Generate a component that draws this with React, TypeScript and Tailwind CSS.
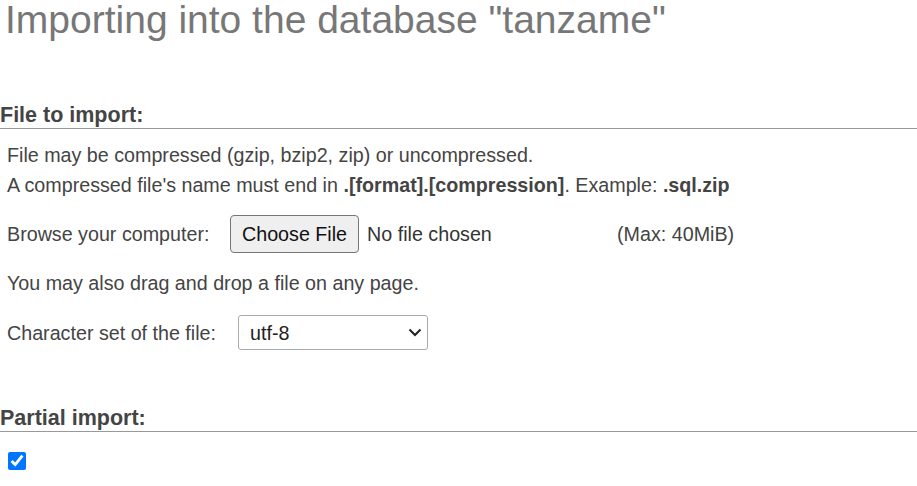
export default function App() {
  return (
    <div className="min-h-screen bg-white font-['Liberation_Sans',Arial,sans-serif] text-[#444]">
      <h1 className="h-[40px] pl-[5px] text-[39px] leading-[40px] text-[#777]">
        Importing into the database "tanzame"
      </h1>

      {/* File to import */}
      <section className="mt-[62px]">
        <h2 className="border-b border-[#999] text-[21.5px] font-bold leading-[26px] text-[#444]">
          File to import:
        </h2>
        <div className="pl-[7px] pt-[11px] text-[19.7px] leading-[30px]">
          <p>File may be compressed (gzip, bzip2, zip) or uncompressed.</p>
          <p>
            A compressed file's name must end in <b>.[format].[compression]</b>. Example: <b>.sql.zip</b>
          </p>

          <div className="mt-[15px] flex h-[38px] items-center">
            <span className="w-[223px]">Browse your computer:</span>
            <button className="h-[38px] rounded-[4px] border border-[#767676] bg-[#efefef] px-[11px] text-[#111]">
              Choose File
            </button>
            <span className="ml-[8px] w-[250px] text-[#333]">No file chosen</span>
            <span>(Max: 40MiB)</span>
          </div>

          <p className="mt-[15px]">You may also drag and drop a file on any page.</p>

          <div className="mt-[17px] flex h-[35px] items-center">
            <span className="w-[231px]">Character set of the file:</span>
            <div className="relative">
              <select className="h-[35px] w-[190px] appearance-none rounded-[3px] border border-[#aaa] bg-white pl-[11px] text-[#222]">
                <option>utf-8</option>
              </select>
              <svg className="pointer-events-none absolute right-[6px] top-[13px]" width="14" height="9" viewBox="0 0 14 9">
                <path d="M1.5 1.5 L7 7 L12.5 1.5" fill="none" stroke="#222" strokeWidth="2" />
              </svg>
            </div>
          </div>
        </div>
      </section>

      {/* Partial import */}
      <section className="mt-[55px]">
        <h2 className="border-b border-[#999] text-[21.5px] font-bold leading-[26px] text-[#444]">
          Partial import:
        </h2>
        <div className="flex pl-[8px] pt-[20px]">
          <input type="checkbox" defaultChecked className="m-0 h-[18px] w-[18px] accent-[#0075ff]" />
        </div>
      </section>
    </div>
  );
}
